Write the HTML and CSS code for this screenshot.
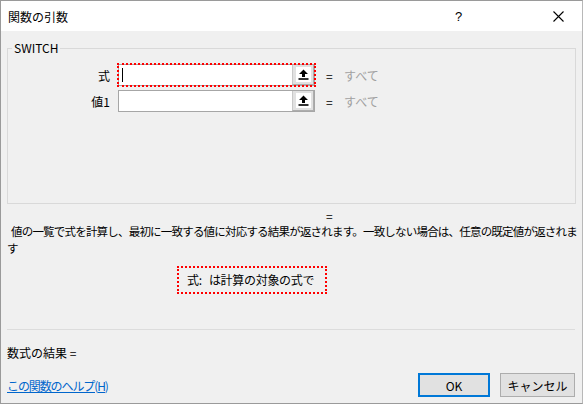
FILE: index.html
```html
<html>
    <head>
        <meta charset="utf-8">
        <title>関数の引数</title>
        <link rel="stylesheet" href="styles.css">
    </head>
    <body>
        <div class="dialog">
            <div class="titlebar">
                <span class="title">関数の引数</span>
                <span class="help-btn">?</span>
                <span class="close-btn">
                    <svg width="11" height="11" viewBox="0 0 11 11"><path d="M0.5 0.5 L10.5 10.5 M10.5 0.5 L0.5 10.5" stroke="#000" stroke-width="1.1" fill="none"/></svg>
                </span>
            </div>

            <div class="content">
                <fieldset class="args">
                    <legend>SWITCH</legend>
                    <div class="arg-row">
                        <span class="arg-label">式</span>
                        <div class="field focused">
                            <div class="field-text"><span class="caret"></span></div>
                            <div class="pick">
                                <span class="pick-icon">
                                    <svg width="11" height="11" viewBox="0 0 11 11"><path d="M5.5 0.5 L10 5 L7 5 L7 8 L4 8 L4 5 L1 5 Z" fill="#000"/><rect x="0.5" y="9.2" width="10" height="1.6" fill="#000"/></svg>
                                </span>
                            </div>
                        </div>
                        <span class="eq">=</span>
                        <span class="arg-value">すべて</span>
                    </div>
                    <div class="arg-row">
                        <span class="arg-label">値1</span>
                        <div class="field">
                            <div class="field-text"></div>
                            <div class="pick">
                                <span class="pick-icon">
                                    <svg width="11" height="11" viewBox="0 0 11 11"><path d="M5.5 0.5 L10 5 L7 5 L7 8 L4 8 L4 5 L1 5 Z" fill="#000"/><rect x="0.5" y="9.2" width="10" height="1.6" fill="#000"/></svg>
                                </span>
                            </div>
                        </div>
                        <span class="eq">=</span>
                        <span class="arg-value">すべて</span>
                    </div>
                </fieldset>

                <div class="result-eq">=</div>
                <p class="desc">値の一覧で式を計算し、最初に一致する値に対応する結果が返されます。一致しない場合は、任意の既定値が返されます</p>
                <div class="arg-help">式:&nbsp;&nbsp;&nbsp;は計算の対象の式で</div>

                <div class="sep"></div>
                <div class="formula-result">数式の結果 =</div>

                <div class="footer">
                    <div class="help-cell"><a class="help-link" href="#">この関数のヘルプ(H)</a></div>
                    <button class="btn btn-ok">OK</button>
                    <button class="btn">キャンセル</button>
                </div>
            </div>
        </div>
    </body>
</html>
```

FILE: styles.css
```css
body {
    margin: 0;
    font-family: "Noto Sans CJK JP", "Noto Sans", sans-serif;
    font-size: 12px;
    color: #000;
    background: #f0f0f0;
}

.dialog {
    width: 583px;
    height: 404px;
    box-sizing: border-box;
    border: 1px solid #9a9a9a;
    border-right-color: #b8b8b8;
    background: #f0f0f0;
    overflow: hidden;
}

.titlebar {
    height: 30px;
    background: #fff;
    display: flex;
    align-items: center;
    padding-left: 7px;
}

.title {
    flex: 1;
    font-size: 12px;
}

.help-btn {
    font-size: 13px;
    width: 12px;
    margin-right: 86px;
    font-family: "Liberation Sans", sans-serif;
}

.close-btn {
    display: flex;
    margin-right: 18px;
}

.content {
    padding: 0 6px;
}

.args {
    margin: 9px 0 0 0;
    padding: 8px 0 87px 0;
    border: 1px solid #d9d9d9;
}

.args legend {
    margin-left: 4px;
    padding: 0 2px;
    line-height: 16px;
    font-size: 12px;
}

.arg-row {
    display: flex;
    align-items: center;
    height: 22px;
    margin-bottom: 4px;
}

.arg-label {
    width: 102px;
    text-align: right;
    margin-right: 8px;
}

.field {
    width: 197px;
    height: 22px;
    box-sizing: border-box;
    border: 1px solid #a6a6a6;
    background: #fff;
    display: flex;
}

.field.focused {
    outline: 2px dotted #ff0000;
    outline-offset: -1px;
}

.field-text {
    flex: 1;
    display: flex;
    align-items: center;
    padding-left: 3px;
}

.caret {
    width: 1px;
    height: 14px;
    background: #000;
}

.pick {
    width: 20px;
    background: #e1e1e1;
    border-left: 1px solid #c8c8c8;
    border-right: 1px solid #adadad;
    border-bottom: 1px solid #adadad;
    display: flex;
    align-items: center;
    justify-content: center;
}

.pick-icon {
    width: 15px;
    height: 15px;
    background: #fff;
    display: flex;
    align-items: center;
    justify-content: center;
}

.eq {
    margin-left: 11px;
    width: 7px;
}

.arg-value {
    margin-left: 11px;
    color: #a0a0a0;
}

.result-eq {
    margin-top: 4px;
    padding-left: 319px;
    line-height: 15px;
}

.desc {
    margin: 0 -5px 0 0;
    line-height: 17px;
    font-size: 11.5px;
    letter-spacing: -0.8px;
    text-indent: 4px;
}

.arg-help {
    margin: 9px 0 0 170px;
    width: 150px;
    height: 28px;
    box-sizing: border-box;
    border: 2px dotted #ff0000;
    padding-left: 8px;
    line-height: 24px;
    letter-spacing: -0.3px;
}

.sep {
    margin-top: 35px;
    margin-right: 1px;
    border-top: 1px solid #dcdcdc;
}

.formula-result {
    margin-top: 15px;
    line-height: 16px;
}

.footer {
    display: flex;
    align-items: center;
    margin-top: 12px;
    margin-right: 1px;
}

.help-cell {
    flex: 1;
}

.help-link {
    color: #0066cc;
    text-decoration: underline;
    letter-spacing: -1.1px;
}

.btn {
    font-family: "Noto Sans CJK JP", "Noto Sans", sans-serif;
    font-size: 12px;
    height: 24px;
    width: 75px;
    background: #e1e1e1;
    border: 1px solid #adadad;
    margin-left: 10px;
    padding: 0;
    color: #000;
}

.btn-ok {
    width: 72px;
    border: 2px solid #0078d7;
}
```
